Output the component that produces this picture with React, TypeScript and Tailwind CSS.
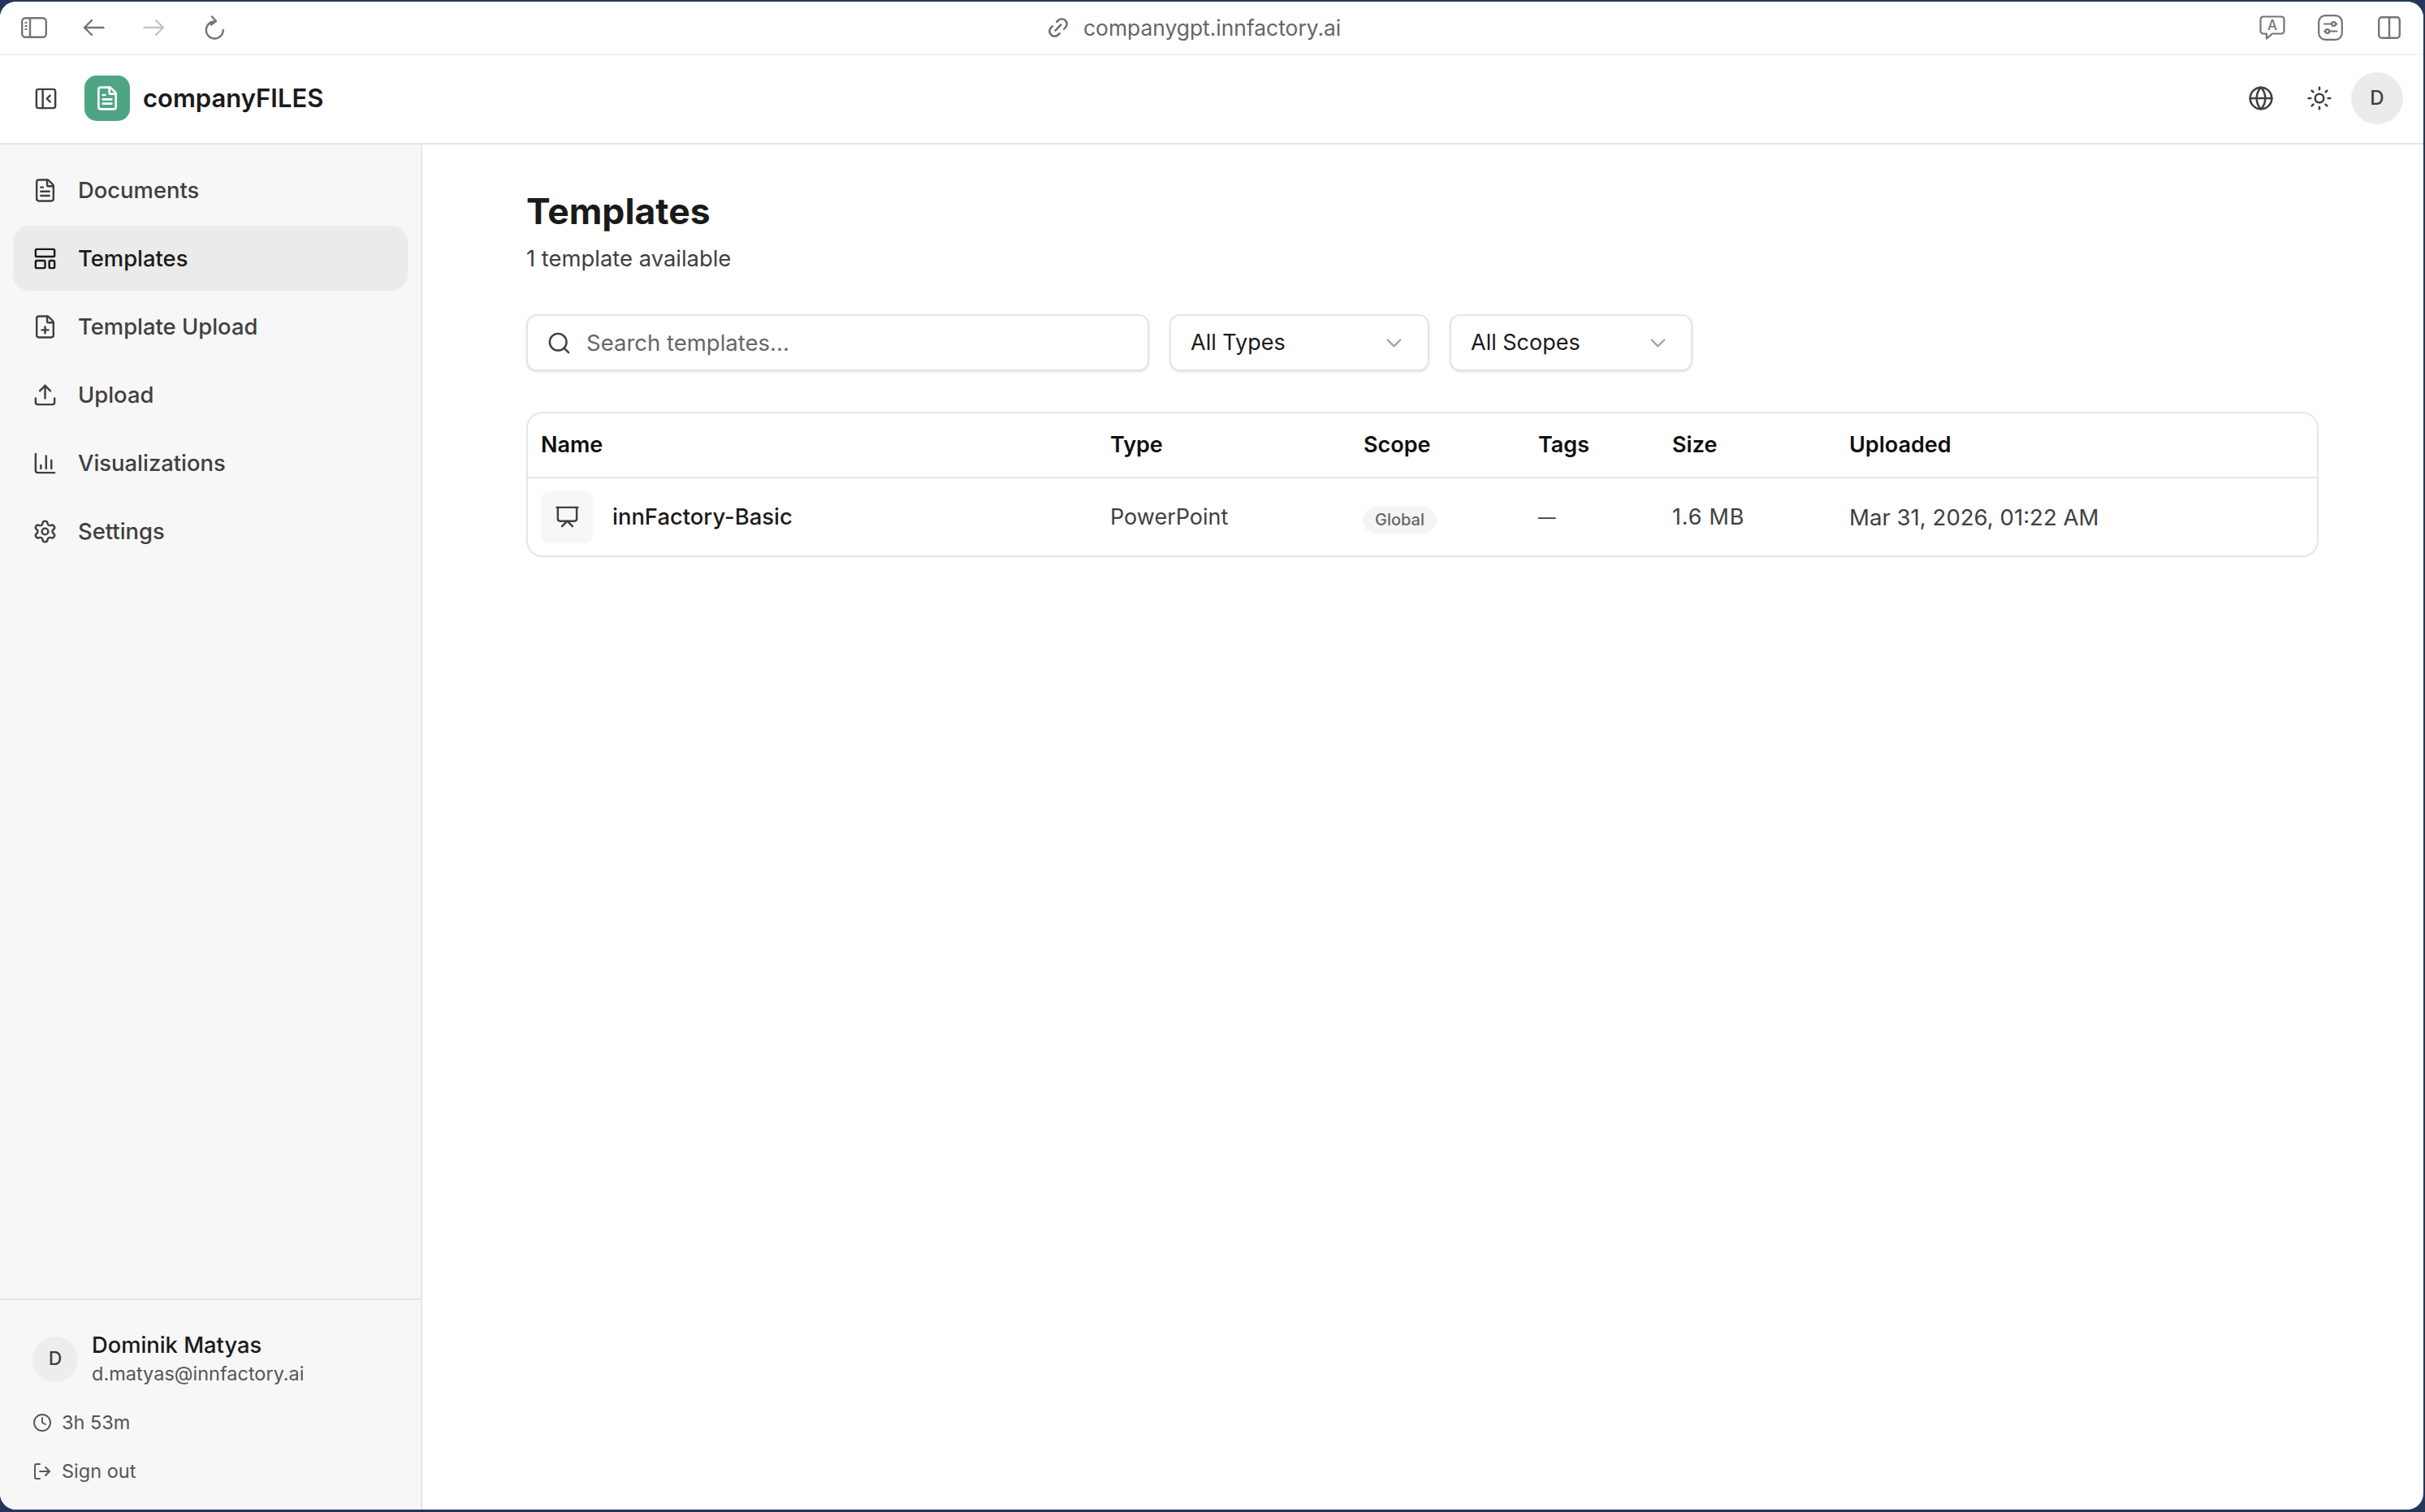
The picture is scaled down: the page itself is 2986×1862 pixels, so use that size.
import { ChartColumn, ChevronDown, Clock, FilePlus, FileText, Globe, LayoutTemplate, Link2, LogOut, PanelLeftClose, Presentation, Search, Settings, Sun, Upload } from "lucide-react";

const navItems = [
  { label: "Documents", icon: FileText },
  { label: "Templates", icon: LayoutTemplate, active: true },
  { label: "Template Upload", icon: FilePlus },
  { label: "Upload", icon: Upload },
  { label: "Visualizations", icon: ChartColumn },
  { label: "Settings", icon: Settings },
];

function BrowserBar() {
  return (
    <div className="flex h-[66px] shrink-0 items-center border-b-2 border-[#f2f2f2] bg-white text-[#757575]">
      <div className="flex items-center">
        <svg className="ml-[26px] h-[26px] w-[32px]" viewBox="0 0 32 26" fill="none" stroke="currentColor" strokeWidth="2.4">
          <rect x="1.2" y="1.2" width="29.6" height="23.6" rx="4" />
          <path d="M11 1.2v23.6" />
          <path d="M4.5 7h3M4.5 11h3M4.5 15h3" strokeWidth="2" />
        </svg>
        <svg className="ml-[44px] h-[22px] w-[27px]" viewBox="0 0 27 22" fill="none" stroke="currentColor" strokeWidth="2.4" strokeLinecap="round" strokeLinejoin="round">
          <path d="M25.5 11H2M11 2 2 11l9 9" />
        </svg>
        <svg className="ml-[47px] h-[22px] w-[27px] text-[#c4c4c4]" viewBox="0 0 27 22" fill="none" stroke="currentColor" strokeWidth="2.4" strokeLinecap="round" strokeLinejoin="round">
          <path d="M1.5 11H25M16 2l9 9-9 9" />
        </svg>
        <svg className="ml-[48px] h-[30px] w-[26px]" viewBox="0 0 26 30" fill="none" stroke="currentColor" strokeWidth="2.4" strokeLinecap="round" strokeLinejoin="round">
          <path d="M13.5 7.5A10.5 10.5 0 1 0 23.8 18M10 1.5l5 5.5-6 4.5" />
        </svg>
      </div>
      <div className="ml-[1011px] flex items-center gap-[16px] text-[26.4px] text-[#666666]">
        <Link2 className="h-[30px] w-[30px] -rotate-45" strokeWidth={1.9} />
        <span className="pt-[1px]">companygpt.innfactory.ai</span>
      </div>
      <div className="ml-auto flex items-center">
        <svg className="h-[30px] w-[32px] translate-x-[1px]" viewBox="0 0 32 30" fill="none" stroke="currentColor" strokeWidth="2.2" strokeLinejoin="round">
          <path d="M5 1.5h22a3.5 3.5 0 0 1 3.5 3.5v14a3.5 3.5 0 0 1-3.5 3.5H16L9 28.5v-6H5A3.5 3.5 0 0 1 1.5 19V5A3.5 3.5 0 0 1 5 1.5Z" />
          <text x="16" y="18" textAnchor="middle" fontSize="17" fill="currentColor" stroke="none" fontWeight="500">A</text>
        </svg>
        <svg className="ml-[41px] h-[32px] w-[31px]" viewBox="0 0 31 32" fill="none" stroke="currentColor" strokeWidth="2.2" strokeLinecap="round">
          <rect x="1.2" y="1.2" width="28.6" height="29.6" rx="8" />
          <path d="M8 11.5h9M22 11.5h1.5M8 20.5h1.5M14 20.5h9.5" />
          <circle cx="19.5" cy="11.5" r="2.4" />
          <circle cx="11.8" cy="20.5" r="2.4" />
        </svg>
        <svg className="mr-[28px] ml-[43px] h-[28px] w-[28px]" viewBox="0 0 28 28" fill="none" stroke="currentColor" strokeWidth="2.4">
          <rect x="1.2" y="1.2" width="25.6" height="25.6" rx="3.5" />
          <path d="M14 1.2v25.6" />
        </svg>
      </div>
    </div>
  );
}

function AppHeader() {
  return (
    <header className="flex h-[110px] shrink-0 items-center border-b-2 border-[#e5e5e5] bg-white pb-[2px]">
      <PanelLeftClose className="ml-[41px] h-[31px] w-[31px] text-[#404040]" strokeWidth={1.9} />
      <div className="ml-[32px] flex h-[56px] w-[56px] items-center justify-center rounded-[15px] bg-[#4ea584]">
        <FileText className="h-[32px] w-[32px] text-white" strokeWidth={2} />
      </div>
      <span className="ml-[16px] text-[31px] font-semibold text-[#1a1a1a]">companyFILES</span>
      <div className="mr-[25px] ml-auto flex items-center">
        <Globe className="h-[32px] w-[32px] text-[#404040]" strokeWidth={1.9} />
        <Sun className="ml-[40px] h-[32px] w-[32px] text-[#404040]" strokeWidth={1.9} />
        <div className="ml-[23px] flex h-[64px] w-[64px] items-center justify-center rounded-full bg-[#ebebeb] text-[24px] font-medium text-[#404040]">D</div>
      </div>
    </header>
  );
}

function Sidebar() {
  return (
    <aside className="flex w-[520px] shrink-0 flex-col border-r-2 border-[#e5e5e5] bg-[#f7f7f7]">
      <nav className="flex flex-1 flex-col gap-[4px] p-[16px]">
        {navItems.map((item) => (
          <div
            key={item.label}
            className={`flex h-[80px] items-center gap-[25px] rounded-[20px] pl-[24px] text-[27.4px] font-medium ${item.active ? "bg-[#ebebeb] text-[#1a1a1a]" : "text-[#404040]"}`}
          >
            <item.icon className="h-[31px] w-[31px]" strokeWidth={1.9} />
            <span className="pt-[1px]">{item.label}</span>
          </div>
        ))}
      </nav>
      <div className="h-[260px] border-t-2 border-[#e5e5e5] px-[40px] pt-[38px]">
        <div className="flex items-center gap-[17px]">
          <div className="flex h-[56px] w-[56px] items-center justify-center rounded-full bg-[#ededed] text-[23px] font-medium text-[#404040]">D</div>
          <div className="flex flex-col">
            <span className="text-[27.3px] leading-[36px] font-medium text-[#1a1a1a]">Dominik Matyas</span>
            <span className="text-[23.5px] leading-[33px] text-[#555555]">d.matyas@innfactory.ai</span>
          </div>
        </div>
        <div className="mt-[26px] flex h-[36px] items-center gap-[12px] text-[23.5px] text-[#555555]">
          <Clock className="h-[24px] w-[24px]" strokeWidth={1.9} />
          <span>3h 53m</span>
        </div>
        <div className="mt-[24px] flex h-[36px] items-center gap-[12px] text-[23.5px] text-[#555555]">
          <LogOut className="h-[24px] w-[24px]" strokeWidth={1.9} />
          <span>Sign out</span>
        </div>
      </div>
    </aside>
  );
}

function FilterSelect({ label, width, gap }: { label: string; width: string; gap: string }) {
  return (
    <div className={`flex h-[70px] items-center justify-between rounded-[13px] border-2 border-[#e5e5e5] bg-white pl-[24px] text-[27px] text-[#1a1a1a] shadow-sm ${width} ${gap}`}>
      <span className="pt-[1px]">{label}</span>
      <ChevronDown className="h-[31px] w-[31px] text-[#a8a8a8]" strokeWidth={1.9} />
    </div>
  );
}

function TemplatesTable() {
  return (
    <div className="mt-[50px] overflow-hidden rounded-[20px] border-2 border-[#e5e5e5]">
      <table className="w-full table-fixed border-collapse text-left text-[27px]">
        <thead>
          <tr className="h-[79px] border-b-2 border-[#e5e5e5] text-[#0f0f0f]">
            <th className="w-[699px] pl-[16px] font-semibold">Name</th>
            <th className="w-[312px] pl-[18px] font-semibold">Type</th>
            <th className="w-[215px] pl-[18px] font-semibold">Scope</th>
            <th className="w-[165px] pl-[18px] font-semibold">Tags</th>
            <th className="w-[218px] pl-[18px] font-semibold">Size</th>
            <th className="pl-[18px] font-semibold">Uploaded</th>
          </tr>
        </thead>
        <tbody>
          <tr className="h-[96px] text-[#404040]">
            <td className="pl-[16px]">
              <div className="flex items-center gap-[24px]">
                <div className="flex h-[64px] w-[64px] items-center justify-center rounded-[10px] bg-[#f7f7f7]">
                  <Presentation className="h-[31px] w-[31px]" strokeWidth={1.9} />
                </div>
                <span className="pt-[1px] text-[27.4px] font-medium text-[#1a1a1a]">innFactory-Basic</span>
              </div>
            </td>
            <td className="pt-[2px] pl-[18px]">PowerPoint</td>
            <td className="pl-[17px]">
              <span className="inline-flex h-[33px] w-[91px] translate-y-[2px] items-center justify-center rounded-full bg-[#f5f5f5] text-[20px] font-medium text-[#666666]">Global</span>
            </td>
            <td className="pt-[2px] pl-[18px] text-[21.5px]">—</td>
            <td className="pt-[2px] pl-[18px] tracking-[0.8px]">1.6 MB</td>
            <td className="pt-[2px] pl-[18px] text-[27.6px]">Mar 31, 2026, 01:22 AM</td>
          </tr>
        </tbody>
      </table>
    </div>
  );
}

export default function App() {
  return (
    <div className="h-[1862px] w-[2986px] overflow-hidden bg-[#25365a] pt-[2px] pr-[2px] pb-[3px] font-[Inter,sans-serif]">
      <div className="flex h-full flex-col overflow-hidden rounded-[20px] bg-white">
        <BrowserBar />
        <AppHeader />
        <div className="flex min-h-0 flex-1">
          <Sidebar />
          <main className="flex-1 pt-[52px] pr-[129px] pl-[128px]">
            <h1 className="text-[44.5px] leading-[60px] font-bold text-[#1a1a1a]">Templates</h1>
            <p className="mt-[8px] text-[27.4px] leading-[40px] text-[#404040]">1 template available</p>
            <div className="mt-[49px] flex">
              <div className="flex h-[70px] w-[767px] items-center gap-[18px] rounded-[13px] border-2 border-[#e5e5e5] bg-white pl-[23px] shadow-sm">
                <Search className="h-[31px] w-[31px] text-[#404040]" strokeWidth={1.9} />
                <input placeholder="Search templates..." className="flex-1 bg-transparent pt-[1px] text-[27.5px] outline-none placeholder:text-[#666666]" />
              </div>
              <FilterSelect label="All Types" width="w-[320px]" gap="ml-[25px] pr-[26px]" />
              <FilterSelect label="All Scopes" width="w-[299px]" gap="ml-[25px] pr-[25px]" />
            </div>
            <TemplatesTable />
          </main>
        </div>
      </div>
    </div>
  );
}
